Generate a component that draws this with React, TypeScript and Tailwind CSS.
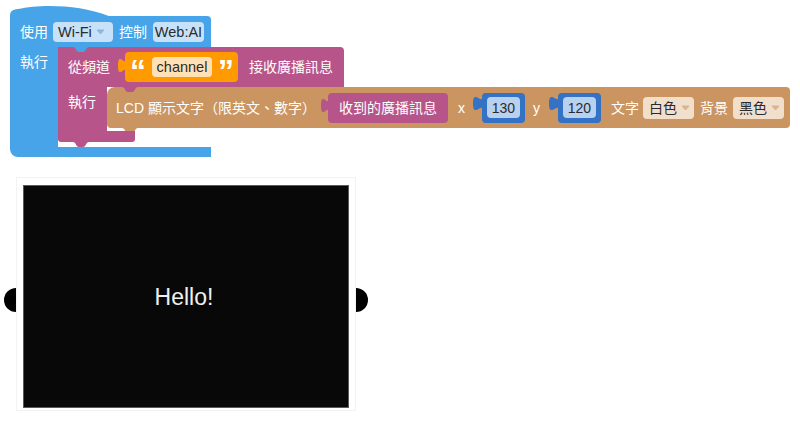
import React from "react";

const BLUE = "#47a4e9";
const PURPLE = "#b7558a";
const ORANGE = "#ff9a00";
const BROWN = "#ca9560";
const DBLUE = "#3372c4";

function Notch({ fill, className }: { fill: string; className: string }) {
  return (
    <svg width="16" height="5" viewBox="0 0 16 5" className={className}>
      <path d="M0 0 C3 0 3 5 6 5 H10 C13 5 13 0 16 0 Z" fill={fill} />
    </svg>
  );
}

function Tab({ fill, className, w = 8 }: { fill: string; className: string; w?: number }) {
  return (
    <svg width={w} height="15" viewBox="0 0 8 15" preserveAspectRatio="none" className={className}>
      <path d="M8.5,0 L8,0 c0,10 -8,-8 -8,7.5 s8,-2.5 8,7.5 L8.5,15 Z" fill={fill} />
    </svg>
  );
}

function Arrow({ fill }: { fill: string }) {
  return (
    <svg width="9" height="6" viewBox="0 0 9 6" className="ml-[4px] shrink-0">
      <path d="M1 1 H8 L4.5 5 Z" fill={fill} stroke={fill} strokeWidth="1" strokeLinejoin="round" />
    </svg>
  );
}

function NumberBlock({ value }: { value: string }) {
  return (
    <div className="flex items-start">
      <Tab fill={DBLUE} w={10} className="-mr-px mt-[3px] block shrink-0" />
      <div className="flex h-[30px] w-[43px] items-center justify-center rounded-[4px] bg-[#3372c4]">
        <div className="flex h-[21px] w-[33px] items-center justify-center rounded-[4px] bg-[#b9d1f0] text-[#2b2b2b]">
          {value}
        </div>
      </div>
    </div>
  );
}

function BrownDropdown({ label }: { label: string }) {
  return (
    <div className="flex h-[22px] w-[51px] items-center rounded-[4px] bg-[#f2dfcb] pl-[6px] text-[#2b2b2b]">
      <span>{label}</span>
      <Arrow fill="#d8b48f" />
    </div>
  );
}

export default function App() {
  return (
    <div className="h-[425px] w-[800px] overflow-hidden bg-white font-['Liberation_Sans','Noto_Sans_CJK_TC',sans-serif] text-[14px] leading-[20px] text-white">
      {/* Event block */}
      <div className="ml-[10px] w-max pt-[5px]">
        <svg width="100" height="11" viewBox="0 0 100 11" className="block">
          <path d="M0 11.5 C0 6 2 5 8 4 C30 -1 70 -1 100 11.5 Z" fill={BLUE} />
        </svg>
        <div className="flex h-[31px] w-[201px] items-center rounded-tr-[4px] bg-[#47a4e9] pl-[10px]">
          <span>使用</span>
          <div className="ml-[5px] flex h-[20px] w-[60px] items-center rounded-[4px] bg-[#c7e2f8] pl-[5px] text-[14.5px] text-[#2b2b2b]">
            <span>Wi-Fi</span>
            <Arrow fill="#8ab8e2" />
          </div>
          <span className="ml-[6px]">控制</span>
          <div className="ml-[6px] flex h-[20px] w-[51px] items-center justify-center rounded-[4px] bg-[#c7e2f8] text-[14.5px] text-[#2b2b2b]">
            Web:AI
          </div>
        </div>
        <div className="flex">
          <div className="w-[48px] bg-[#47a4e9] pl-[10px] pt-[5px]">執行</div>
          <div className="pb-[5px]">
            {/* Broadcast receive block */}
            <div className="relative w-max">
              <div className="relative flex h-[40px] w-[286px] items-center rounded-tr-[4px] bg-[#b7558a] pl-[10px]">
                <Notch fill={BLUE} className="absolute left-[15px] top-0" />
                <span>從頻道</span>
                <div className="ml-[8px] flex items-start">
                  <Tab fill={ORANGE} className="-mr-px mt-[6px] block shrink-0" />
                  <div className="flex h-[30px] w-[113px] items-center rounded-[4px] bg-[#ff9a00] pl-[5px]">
                    <span className="mt-[3px] self-start text-[32px] font-bold leading-none">“</span>
                    <div className="ml-[6px] flex h-[20px] w-[60px] items-center justify-center rounded-[4px] bg-[#ffe1b5] text-[14.5px] text-[#2b2b2b]">
                      channel
                    </div>
                    <span className="ml-[6px] mt-[3px] self-start text-[32px] font-bold leading-none">”</span>
                  </div>
                </div>
                <span className="ml-[11px]">接收廣播訊息</span>
              </div>
              <div className="flex">
                <div className="w-[49px] bg-[#b7558a] pl-[10px] pt-[5px]">執行</div>
                <div className="pb-[3px]">
                  {/* LCD block */}
                  <div className="relative flex h-[41px] w-[683px] items-center rounded-[4px] rounded-tl-[8px] bg-[#ca9560] pl-[9px]">
                    <Notch fill={PURPLE} className="absolute left-[15px] top-0" />
                    <Notch fill={BROWN} className="absolute left-[15px] top-full" />
                    <span>LCD 顯示文字（限英文、數字）</span>
                    <div className="ml-[5px] flex items-start">
                      <Tab fill={PURPLE} className="-mr-px mt-[5px] block shrink-0" />
                      <div className="flex h-[30px] w-[120px] items-center justify-center rounded-[4px] bg-[#b7558a]">
                        收到的廣播訊息
                      </div>
                    </div>
                    <span className="ml-[10px]">x</span>
                    <div className="ml-[8px]">
                      <NumberBlock value="130" />
                    </div>
                    <span className="ml-[8px]">y</span>
                    <div className="ml-[9px]">
                      <NumberBlock value="120" />
                    </div>
                    <span className="ml-[10px]">文字</span>
                    <div className="ml-[4px]">
                      <BrownDropdown label="白色" />
                    </div>
                    <span className="ml-[6px]">背景</span>
                    <div className="ml-[5px]">
                      <BrownDropdown label="黑色" />
                    </div>
                  </div>
                </div>
              </div>
              <div className="relative h-[11px] w-[77px] rounded-b-[3px] bg-[#b7558a]">
                <Notch fill={PURPLE} className="absolute left-[15px] top-full" />
              </div>
            </div>
          </div>
        </div>
        <div className="h-[10px] w-[201px] rounded-bl-[8px] bg-[#47a4e9]" />
      </div>

      {/* LCD display */}
      <div className="relative ml-[16px] mt-[20px] h-[234px] w-[340px] border border-[#f2f2f2] pl-[6px] pt-[7px]">
        <div className="absolute left-[-13px] top-[110px] h-[24px] w-[12px] rounded-l-full bg-black" />
        <div className="absolute right-[-13px] top-[110px] h-[24px] w-[12px] rounded-r-full bg-black" />
        <div className="flex h-[223px] w-[326px] items-center justify-center border border-[#5a5a5a] bg-[#080808] pr-[4px] text-[23px] text-[#f0f0f0]">
          Hello!
        </div>
      </div>
    </div>
  );
}
